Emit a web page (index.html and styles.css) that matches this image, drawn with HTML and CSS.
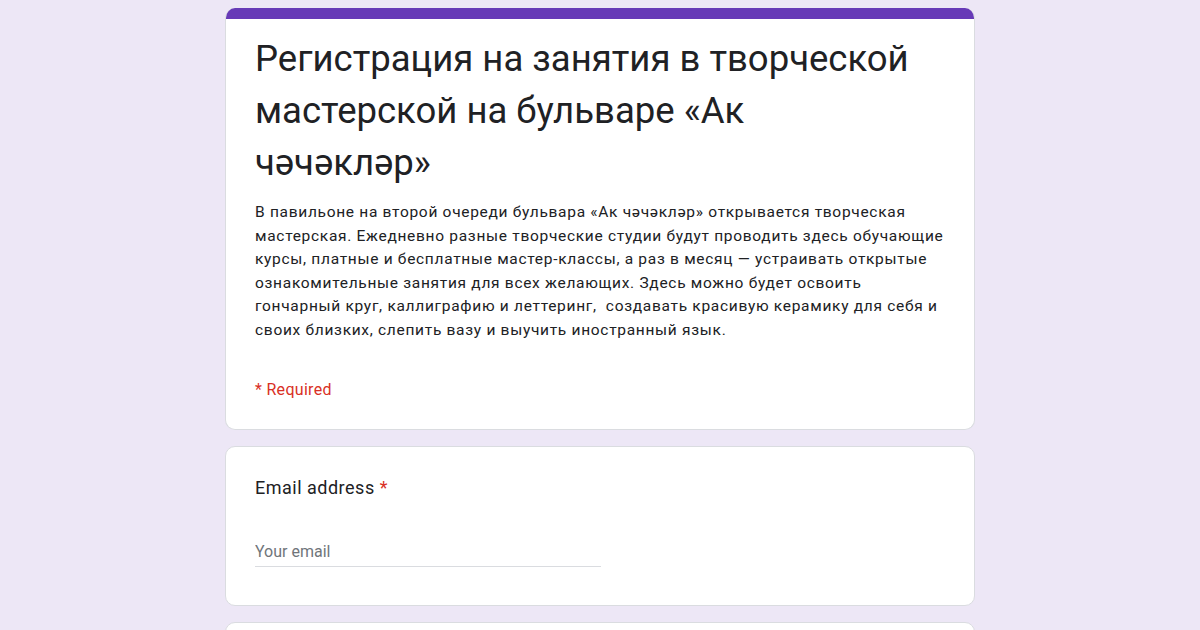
FILE: index.html
```html
<!DOCTYPE html>
<html lang="ru">
<head>
    <meta charset="UTF-8">
    <meta name="viewport" content="width=device-width, initial-scale=1.0">
    <title>Регистрация на занятия</title>
    <link rel="stylesheet" href="styles.css">
</head>
<body>
    <main class="form-wrap">
        <section class="card card-header">
            <div class="card-band"></div>
            <div class="card-body">
                <h1 class="form-title">Регистрация на занятия в творческой мастерской на бульваре «Ак чәчәкләр»</h1>
                <p class="form-desc">В павильоне на второй очереди бульвара «Ак чәчәкләр» открывается творческая мастерская. Ежедневно разные творческие студии будут проводить здесь обучающие курсы, платные и бесплатные мастер-классы, а раз в месяц — устраивать открытые ознакомительные занятия для всех желающих. Здесь можно будет освоить гончарный круг, каллиграфию и леттеринг,&nbsp; создавать красивую керамику для себя и своих близких, слепить вазу и выучить иностранный язык.</p>
                <div class="required-note">* Required</div>
            </div>
        </section>

        <section class="card question">
            <div class="question-title">Email address <span class="star">*</span></div>
            <input class="text-input" type="email" placeholder="Your email">
        </section>

        <section class="card question question-next"></section>
    </main>
</body>
</html>
```

FILE: styles.css
```css
html, body {
    height: 100%;
    overflow: hidden;
}
body {
    background-color: #ede7f6;
    margin: 0;
    padding: 0;
    font-family: Roboto, 'Noto Sans', Arial, sans-serif;
    color: #202124;
}
.form-wrap {
    width: 750px;
    margin: 0 auto;
    padding-top: 8px;
    display: flex;
    flex-direction: column;
    gap: 16px;
}
.card {
    background-color: #fff;
    border: 1px solid #dadce0;
    border-radius: 10px;
    box-sizing: border-box;
}
.card-header {
    overflow: hidden;
    border-top: none;
}
.card-band {
    height: 11px;
    background-color: #673ab7;
}
.card-body {
    padding: 14px 29px 30px 29px;
}
.form-title {
    font-family: Roboto, 'Noto Sans', sans-serif;
    font-weight: 400;
    font-size: 36.5px;
    line-height: 52px;
    max-width: 665px;
    margin: 0;
    color: #202124;
}
.form-desc {
    font-size: 15.5px;
    line-height: 23.5px;
    letter-spacing: 0.7px;
    margin: 12px 0 0 0;
    color: #202124;
}
.required-note {
    color: #d93025;
    font-size: 16px;
    letter-spacing: 0.3px;
    margin-top: 38px;
}
.question {
    padding: 28px 29px 38px 29px;
}
.question-title {
    font-size: 18px;
    line-height: 26px;
    letter-spacing: 0.5px;
    color: #202124;
}
.star {
    color: #d93025;
}
.text-input {
    display: block;
    width: 346px;
    margin-top: 37px;
    padding: 4px 0 5px 0;
    border: none;
    border-bottom: 1px solid #dadce0;
    font-family: Roboto, 'Noto Sans', sans-serif;
    font-size: 16px;
    color: #202124;
    outline: none;
}
.text-input::placeholder {
    color: #70757a;
}
.question-next {
    height: 20px;
}
```
